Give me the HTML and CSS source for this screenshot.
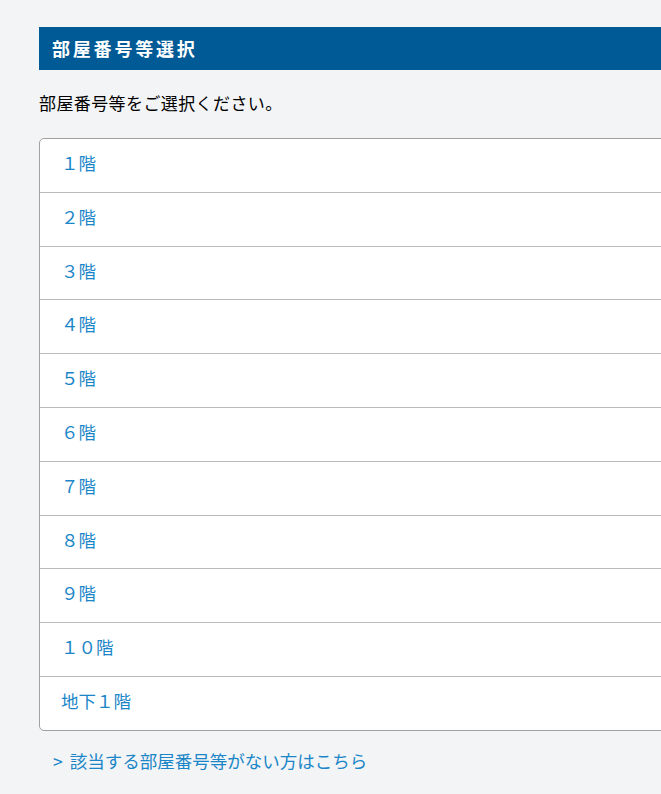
FILE: index.html
```html
<!DOCTYPE html>
<html lang="ja">
  <head>
    <meta charset="utf-8" />
    <title>部屋番号等選択</title>
    <link rel="stylesheet" href="styles.css">
  </head>
  <body>
    <div class="page">
      <h1 class="title">部屋番号等選択</h1>
      <p class="lead">部屋番号等をご選択ください。</p>

      <ul class="rooms">
        <li><a href="#">１階</a></li>
        <li><a href="#">２階</a></li>
        <li><a href="#">３階</a></li>
        <li><a href="#">４階</a></li>
        <li><a href="#">５階</a></li>
        <li><a href="#">６階</a></li>
        <li><a href="#">７階</a></li>
        <li><a href="#">８階</a></li>
        <li><a href="#">９階</a></li>
        <li><a href="#">１０階</a></li>
        <li><a href="#">地下１階</a></li>
      </ul>

      <a class="other" href="#">&gt; 該当する部屋番号等がない方はこちら</a>
    </div>
  </body>
</html>
```

FILE: styles.css
```css
html, body {
  margin: 0;
  padding: 0;
}
body {
  background-color: #f3f4f6;
  color: #000;
  font-family: "Noto Sans CJK JP", "Noto Sans", sans-serif;
  font-size: 17px;
  overflow-x: hidden;
}
a {
  color: #1a86c8;
  text-decoration: none;
}
.page {
  margin-left: 39px;
  padding-top: 27px;
  width: 700px;
}
.title {
  background-color: #005a96;
  color: #fff;
  font-size: 18px;
  font-weight: bold;
  height: 43px;
  letter-spacing: 2.8px;
  line-height: 43px;
  margin: 0;
  padding: 0 13px;
}
.lead {
  letter-spacing: 0.4px;
  line-height: 24px;
  margin: 21px 0 23px 0;
}
.rooms {
  background-color: #fff;
  border: 1px solid #a0a0a0;
  border-radius: 5px;
  list-style: none;
  margin: 0;
  padding: 0;
}
.rooms li {
  border-top: 1px solid #bbb;
}
.rooms li:first-child {
  border-top: none;
}
.rooms a {
  display: block;
  font-size: 17.5px;
  height: 52.8px;
  line-height: 48px;
  padding-left: 21px;
}
.other {
  display: inline-block;
  font-size: 17.5px;
  line-height: 24px;
  margin: 18px 0 0 14px;
  word-spacing: 3px;
}
```
